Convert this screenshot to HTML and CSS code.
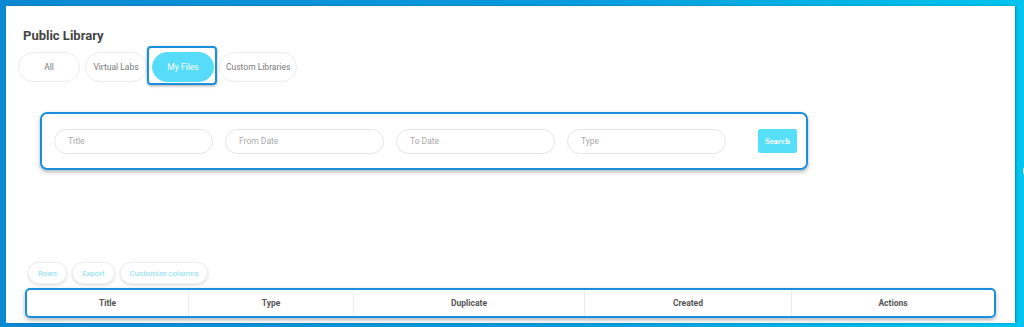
FILE: index.html
```html
<!DOCTYPE html>
<html lang="en">

<head>
    <meta charset="UTF-8">
    <meta name="viewport" content="width=device-width, initial-scale=1.0">
    <title>Public Library</title>
    <link rel="stylesheet" href="styles.css">
</head>

<body>
    <div class="panel">
        <h2 class="title">Public Library</h2>

        <div class="tabs">
            <button class="tab">All</button>
            <button class="tab">Virtual Labs</button>
            <button class="tab active">My Files</button>
            <button class="tab">Custom Libraries</button>
        </div>

        <!-- filter form -->
        <form class="search-card">
            <input class="field" type="text" placeholder="Title">
            <input class="field" type="text" placeholder="From Date">
            <input class="field" type="text" placeholder="To Date">
            <input class="field" type="text" placeholder="Type">
            <button type="button" class="search-btn">Search</button>
        </form>

        <div class="table-tools">
            <button class="tool">Rows</button>
            <button class="tool">Export</button>
            <button class="tool">Customize columns</button>
        </div>

        <div class="table-head">
            <div class="col c1">Title</div>
            <div class="col c2">Type</div>
            <div class="col c3">Duplicate</div>
            <div class="col c4">Created</div>
            <div class="col c5">Actions</div>
        </div>

        <span class="side-handle"></span>
    </div>
</body>

</html>
```

FILE: styles.css
```css
body {
    margin: 0;
    height: 327px;
    box-sizing: border-box;
    padding: 6px 9px 4px 6px;
    background: linear-gradient(90deg, #0b89d2, #0a9bdc 55%, #00c4ef);
    font-family: Roboto, "Liberation Sans", sans-serif;
    overflow: hidden;
}

.panel {
    position: relative;
    height: 100%;
    box-sizing: border-box;
    padding-top: 22px;
    background: #fff;
    box-shadow: 1px 0 2px rgba(0, 0, 0, 0.25);
}

.title {
    margin: 0 0 0 17px;
    font-size: 13px;
    line-height: 16px;
    font-weight: bold;
    color: #454545;
}

.tabs {
    display: flex;
    gap: 5px;
    margin: 8px 0 0 12px;
}

.tab {
    position: relative;
    height: 30px;
    min-width: 62px;
    padding: 0 6px;
    border: 1px solid #ececec;
    border-radius: 15px;
    background: #fff;
    color: #777;
    font-family: inherit;
    font-size: 8.5px;
}

.tab.active {
    background: #56dcf8;
    border-color: #56dcf8;
    color: #fff;
}

/* highlight frame around the selected tab */
.tab.active::after {
    content: "";
    position: absolute;
    left: -6px;
    right: -4px;
    top: -7px;
    bottom: -4px;
    border: 2px solid #1a8fdc;
    border-radius: 4px;
    box-shadow: 0 1px 3px rgba(0, 0, 0, 0.35);
}

.search-card {
    display: flex;
    align-items: center;
    gap: 12px;
    width: 768px;
    height: 58px;
    box-sizing: border-box;
    margin: 30px 0 0 34px;
    padding-left: 12px;
    border: 2px solid #1a8fdc;
    border-radius: 7px;
    box-shadow: 0 2px 4px rgba(0, 0, 0, 0.3);
}

.field {
    width: 159px;
    height: 25px;
    box-sizing: border-box;
    padding: 0 0 0 13px;
    border: 1px solid #e4e4e4;
    border-radius: 13px;
    font-family: inherit;
    font-size: 8.5px;
    outline: none;
}

.field::placeholder {
    color: #a8a8a8;
}

.search-btn {
    width: 39px;
    height: 24px;
    margin-left: 20px;
    padding: 0;
    border: none;
    border-radius: 2px;
    background: #56dff9;
    color: #fff;
    font-family: "Liberation Serif", serif;
    font-weight: bold;
    font-size: 8.5px;
}

.table-tools {
    display: flex;
    gap: 5px;
    margin: 92px 0 0 22px;
}

.tool {
    height: 22px;
    padding: 0 9px;
    border: 1px solid #f0f0f0;
    border-radius: 11px;
    background: #fff;
    box-shadow: 0 1px 3px rgba(0, 0, 0, 0.15);
    color: #85ddf4;
    font-family: inherit;
    font-size: 7.8px;
}

.table-head {
    display: flex;
    width: 971px;
    height: 30px;
    box-sizing: border-box;
    margin: 4px 0 0 19px;
    border: 2px solid #1a8fdc;
    border-radius: 5px;
    box-shadow: 0 2px 4px rgba(0, 0, 0, 0.3);
}

.col {
    display: flex;
    align-items: center;
    justify-content: center;
    border-left: 1px solid #ececec;
    color: #555;
    font-size: 8.5px;
    font-weight: bold;
}

.c1 { width: 161px; border-left: none; }
.c2 { width: 164px; }
.c3 { width: 230px; }
.c4 { width: 206px; }
.c5 { flex: 1; }

/* white handle peeking in from the right edge */
.side-handle {
    position: absolute;
    right: -22px;
    top: 158px;
    width: 14px;
    height: 14px;
    border-radius: 50%;
    background: #fff;
}
```
